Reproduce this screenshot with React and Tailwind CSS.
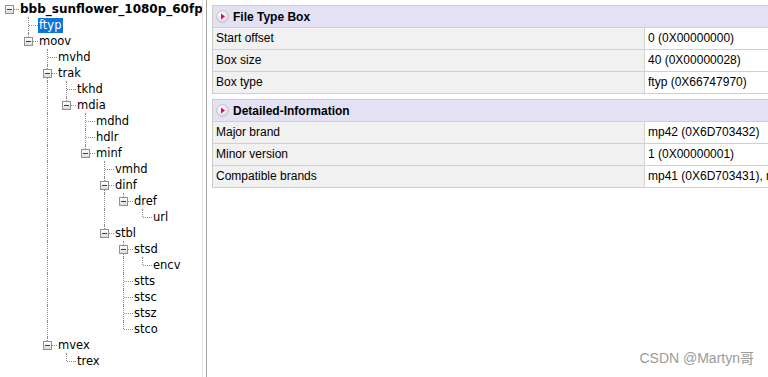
import React from 'react';

// --- MP4 box tree ---
const tree = {
  name: 'bbb_sunflower_1080p_60fps',
  children: [
    { name: 'ftyp', selected: true },
    {
      name: 'moov',
      children: [
        { name: 'mvhd' },
        {
          name: 'trak',
          children: [
            { name: 'tkhd' },
            {
              name: 'mdia',
              children: [
                { name: 'mdhd' },
                { name: 'hdlr' },
                {
                  name: 'minf',
                  children: [
                    { name: 'vmhd' },
                    { name: 'dinf', children: [{ name: 'dref', children: [{ name: 'url' }] }] },
                    {
                      name: 'stbl',
                      children: [
                        { name: 'stsd', children: [{ name: 'encv' }] },
                        { name: 'stts' },
                        { name: 'stsc' },
                        { name: 'stsz' },
                        { name: 'stco' },
                      ],
                    },
                  ],
                },
              ],
            },
          ],
        },
        { name: 'mvex', children: [{ name: 'trex' }] },
      ],
    },
  ],
};

// aplatit l'arbre en lignes
const flatten = (node, depth = 0, guides = [], isLast = true, out = []) => {
  out.push({ ...node, depth, guides, isLast, hasChildren: !!node.children });
  if (node.children) {
    node.children.forEach((child, i) => {
      const last = i === node.children.length - 1;
      const nextGuides = depth === 0 ? [false] : [...guides, !isLast];
      flatten(child, depth + 1, nextGuides, last, out);
    });
  }
  return out;
};

const rows = flatten(tree);

const Expander = () => (
  <div className="absolute left-[5px] top-[4px] w-[9px] h-[9px] border border-[#919191] bg-gradient-to-b from-white to-[#dcdcdc] z-10">
    <div className="absolute left-[1px] top-[3px] w-[5px] h-px bg-[#1f3f95]" />
  </div>
);

const TreeRow = ({ row }) => (
  <div className="flex h-4 items-center">
    {row.guides.map((g, i) => (
      <div key={i} className="relative w-[19px] h-full shrink-0">
        {g && <div className="absolute left-[9px] top-0 bottom-0 border-l border-dotted border-[#8c8c8c]" />}
      </div>
    ))}
    <div className="relative w-[19px] h-full shrink-0">
      {row.depth > 0 && (
        <div
          className={`absolute left-[9px] top-0 border-l border-dotted border-[#8c8c8c] ${row.isLast ? 'h-[8px]' : 'bottom-0'}`}
        />
      )}
      <div className="absolute left-[10px] top-[8px] w-[9px] border-t border-dotted border-[#8c8c8c]" />
      {row.hasChildren && <Expander />}
    </div>
    <span
      className={`h-[15px] leading-[15px] pl-px pr-[2px] whitespace-nowrap ${
        row.selected ? 'bg-[#0a74da] text-white' : 'text-black'
      } ${row.depth === 0 ? 'font-bold text-[12px]' : 'text-[11.5px]'}`}
    >
      {row.name}
    </span>
  </div>
);

const SectionIcon = () => (
  <svg width="13" height="13" viewBox="0 0 13 13" className="shrink-0">
    <defs>
      <radialGradient id="g" cx="0.4" cy="0.35" r="0.7">
        <stop offset="0" stopColor="#ffffff" />
        <stop offset="1" stopColor="#d6d6d6" />
      </radialGradient>
    </defs>
    <circle cx="6.5" cy="6.5" r="6" fill="url(#g)" stroke="#c4c4c4" />
    <path d="M5 3.5 L9 6.5 L5 9.5 Z" fill="#e3007d" />
  </svg>
);

const Section = ({ title, items, className = '' }) => (
  <div className={`w-[620px] border-t border-x border-[#cbcbcb] ${className}`}>
    <div className="h-[22px] bg-[#e5e1f4] flex items-center pl-[3px] gap-[4px] border-b border-[#cfcfcf]">
      <SectionIcon />
      <span className="font-bold text-[12px] text-black">{title}</span>
    </div>
    {items.map(([label, value]) => (
      <div key={label} className="flex h-[22px] border-b border-[#d0d0d0]">
        <div className="w-[432px] shrink-0 bg-[#f2f1f1] pl-[3px] leading-[21px] text-[12px] border-r border-[#d3d3d3]">
          {label}
        </div>
        <div className="flex-1 bg-white pl-[3px] leading-[21px] text-[12px] whitespace-nowrap">{value}</div>
      </div>
    ))}
  </div>
);

const App = () => {
  return (
    <div
      className="relative flex w-[768px] h-[377px] overflow-hidden bg-white"
      style={{ fontFamily: '"DejaVu Sans", sans-serif' }}
    >
      {/* arbre */}
      <div className="w-[202px] shrink-0 h-full overflow-hidden pt-px">
        {rows.map((row, i) => (
          <TreeRow key={i} row={row} />
        ))}
      </div>
      <div className="w-px shrink-0 bg-[#e3e3e3]" />
      <div className="w-[3px] shrink-0" />
      <div className="w-px shrink-0 bg-[#a3a3a3]" />

      {/* détails */}
      <div
        className="flex-1 pl-[5px] pt-[5px] overflow-hidden"
        style={{ fontFamily: '"Liberation Sans", Arial, sans-serif' }}
      >
        <Section
          title="File Type Box"
          items={[
            ['Start offset', '0 (0X00000000)'],
            ['Box size', '40 (0X00000028)'],
            ['Box type', 'ftyp (0X66747970)'],
          ]}
        />
        <Section
          className="mt-[5px]"
          title="Detailed-Information"
          items={[
            ['Major brand', 'mp42 (0X6D703432)'],
            ['Minor version', '1 (0X00000001)'],
            ['Compatible brands', 'mp41 (0X6D703431), mp42 (0X6D703432)'],
          ]}
        />
      </div>

      <div
        className="absolute right-[14px] top-[350px] text-[14px] leading-4 text-[#9b9b9b]"
        style={{ fontFamily: '"Liberation Sans", "Noto Sans CJK SC", sans-serif' }}
      >
        CSDN @Martyn哥
      </div>
    </div>
  );
};

export default App;
